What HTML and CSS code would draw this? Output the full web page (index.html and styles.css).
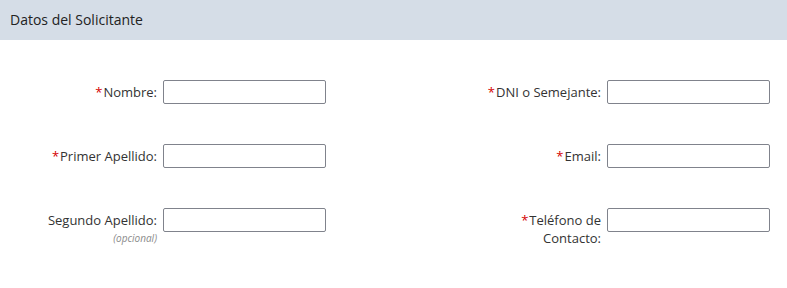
FILE: index.html
```html
<!DOCTYPE html>
<html lang="es">
<head>
  <meta charset="UTF-8" />
  <title>Datos del Solicitante</title>
  <link rel="stylesheet" href="styles.css">
</head>
<body>
  <div class="panel-header">Datos del Solicitante</div>
  <form class="form-grid">
    <div class="field-label"><label><span class="req">*</span>Nombre:</label></div>
    <input type="text" class="field-input">
    <div class="field-label"><label><span class="req">*</span>DNI o Semejante:</label></div>
    <input type="text" class="field-input">

    <div class="field-label"><label><span class="req">*</span>Primer Apellido:</label></div>
    <input type="text" class="field-input">
    <div class="field-label"><label><span class="req">*</span>Email:</label></div>
    <input type="text" class="field-input">

    <div class="field-label">
      <label>Segundo Apellido:</label>
      <span class="optional">(opcional)</span>
    </div>
    <input type="text" class="field-input">
    <div class="field-label"><label><span class="req">*</span>Teléfono de Contacto:</label></div>
    <input type="text" class="field-input">
  </form>
</body>
</html>
```

FILE: styles.css
```css
body {
  font-family: "Open Sans", sans-serif;
  font-size: 13px;
  color: #333;
  background: #fff;
  margin: 0;
}
.panel-header {
  height: 40px;
  line-height: 40px;
  padding-left: 10px;
  background: #d5dde7;
  color: #222;
  font-size: 14px;
}
.form-grid {
  display: grid;
  grid-template-columns: 157px 163px 269px 163px;
  column-gap: 6px;
  row-gap: 40px;
  padding-top: 40px;
  margin: 0;
}
.field-label {
  justify-self: end;
  width: 118px;
  text-align: right;
  padding-top: 3px;
  line-height: 18px;
}
.field-label label {
  display: block;
}
.req {
  color: #d40000;
  margin-right: 1px;
}
.optional {
  display: block;
  font-size: 10px;
  font-style: italic;
  color: #8a8a8a;
  line-height: 12px;
  margin-top: 3px;
}
.field-input {
  width: 163px;
  height: 24px;
  box-sizing: border-box;
  border: 1px solid #80838c;
  border-radius: 2px;
  margin: 0;
  padding: 2px 4px;
  font: inherit;
}
```
